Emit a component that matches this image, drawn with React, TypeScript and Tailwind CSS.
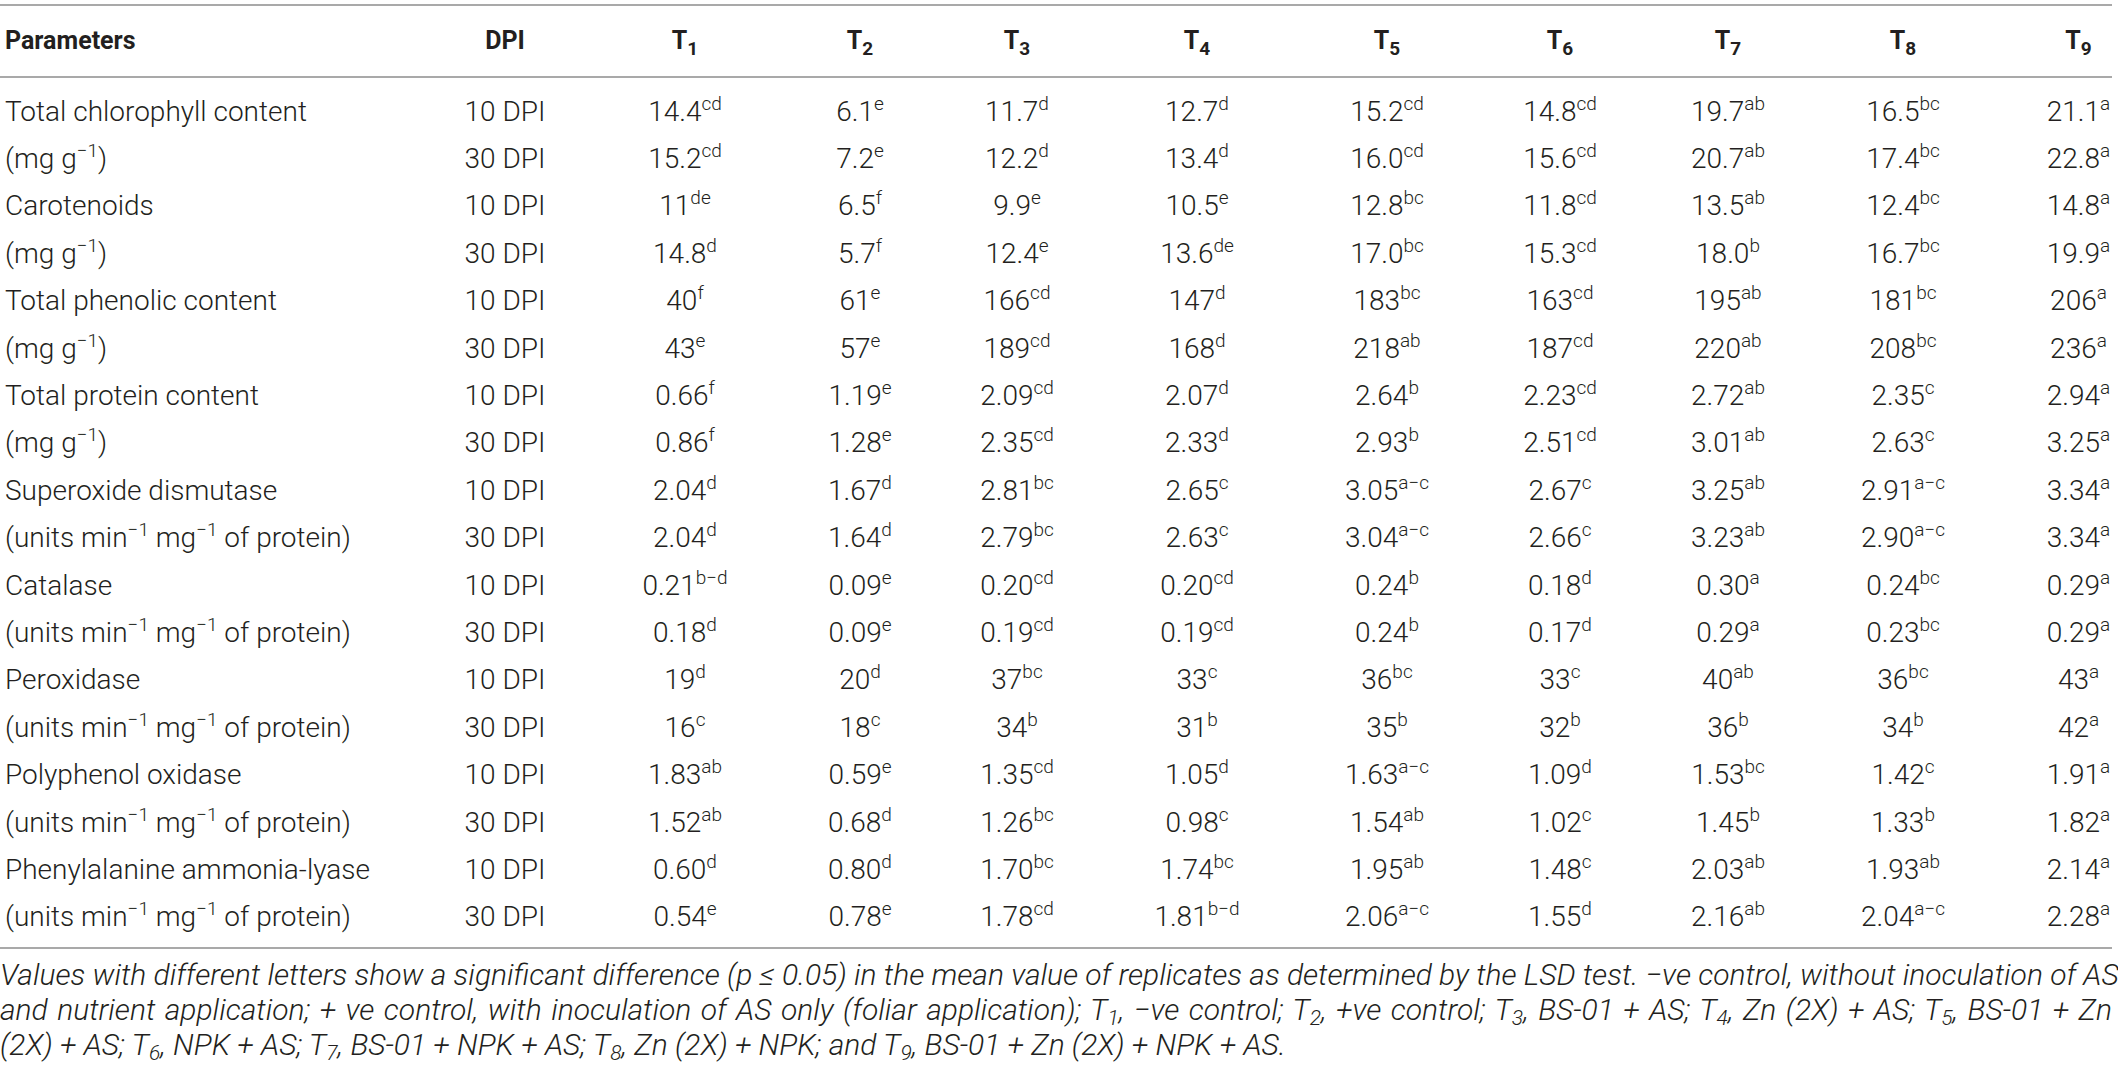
const rows: { label: React.ReactNode; dpi: string; cells: string[] }[] = [];

const units = (
  <>
    (units min<sup className="text-[19px] top-[-11px]">−1</sup> mg<sup className="text-[19px] top-[-11px]">−1</sup> of protein)
  </>
);
const mg = (
  <>
    (mg g<sup className="text-[19px] top-[-11px]">−1</sup>)
  </>
);

const data: [React.ReactNode, string, string][] = [
  ['Total chlorophyll content', '10 DPI', '14.4|cd 6.1|e 11.7|d 12.7|d 15.2|cd 14.8|cd 19.7|ab 16.5|bc 21.1|a'],
  [mg, '30 DPI', '15.2|cd 7.2|e 12.2|d 13.4|d 16.0|cd 15.6|cd 20.7|ab 17.4|bc 22.8|a'],
  ['Carotenoids', '10 DPI', '11|de 6.5|f 9.9|e 10.5|e 12.8|bc 11.8|cd 13.5|ab 12.4|bc 14.8|a'],
  [mg, '30 DPI', '14.8|d 5.7|f 12.4|e 13.6|de 17.0|bc 15.3|cd 18.0|b 16.7|bc 19.9|a'],
  ['Total phenolic content', '10 DPI', '40|f 61|e 166|cd 147|d 183|bc 163|cd 195|ab 181|bc 206|a'],
  [mg, '30 DPI', '43|e 57|e 189|cd 168|d 218|ab 187|cd 220|ab 208|bc 236|a'],
  ['Total protein content', '10 DPI', '0.66|f 1.19|e 2.09|cd 2.07|d 2.64|b 2.23|cd 2.72|ab 2.35|c 2.94|a'],
  [mg, '30 DPI', '0.86|f 1.28|e 2.35|cd 2.33|d 2.93|b 2.51|cd 3.01|ab 2.63|c 3.25|a'],
  ['Superoxide dismutase', '10 DPI', '2.04|d 1.67|d 2.81|bc 2.65|c 3.05|a−c 2.67|c 3.25|ab 2.91|a−c 3.34|a'],
  [units, '30 DPI', '2.04|d 1.64|d 2.79|bc 2.63|c 3.04|a−c 2.66|c 3.23|ab 2.90|a−c 3.34|a'],
  ['Catalase', '10 DPI', '0.21|b−d 0.09|e 0.20|cd 0.20|cd 0.24|b 0.18|d 0.30|a 0.24|bc 0.29|a'],
  [units, '30 DPI', '0.18|d 0.09|e 0.19|cd 0.19|cd 0.24|b 0.17|d 0.29|a 0.23|bc 0.29|a'],
  ['Peroxidase', '10 DPI', '19|d 20|d 37|bc 33|c 36|bc 33|c 40|ab 36|bc 43|a'],
  [units, '30 DPI', '16|c 18|c 34|b 31|b 35|b 32|b 36|b 34|b 42|a'],
  ['Polyphenol oxidase', '10 DPI', '1.83|ab 0.59|e 1.35|cd 1.05|d 1.63|a−c 1.09|d 1.53|bc 1.42|c 1.91|a'],
  [units, '30 DPI', '1.52|ab 0.68|d 1.26|bc 0.98|c 1.54|ab 1.02|c 1.45|b 1.33|b 1.82|a'],
  ['Phenylalanine ammonia-lyase', '10 DPI', '0.60|d 0.80|d 1.70|bc 1.74|bc 1.95|ab 1.48|c 2.03|ab 1.93|ab 2.14|a'],
  [units, '30 DPI', '0.54|e 0.78|e 1.78|cd 1.81|b−d 2.06|a−c 1.55|d 2.16|ab 2.04|a−c 2.28|a'],
];

data.forEach(([label, dpi, s]) => rows.push({ label, dpi, cells: s.split(' ') }));

const grid =
  'grid grid-cols-[415px_180px_180px_170px_144px_216px_164px_182px_154px_196px_111px] items-center';

const T = ({ n }: { n: number }) => (
  <span>
    T<sub className="text-[19px] bottom-[-6px]">{n}</sub>
  </span>
);

const Ti = ({ n }: { n: number }) => (
  <>
    T<sub className="text-[21px] bottom-[-5px]">{n}</sub>
  </>
);

export default function App() {
  return (
    <div className="w-[2112px] bg-white pt-[4px] text-[#231f20] font-[Roboto,'Liberation_Sans',sans-serif]">
      <div className={`${grid} h-[74px] border-y-2 border-[#a9a9a9] text-[25px] font-bold`}>
        <div className="pl-[5px]">Parameters</div>
        <div className="text-center">DPI</div>
        {[1, 2, 3, 4, 5, 6, 7, 8].map((n) => (
          <div key={n} className="text-center">
            <T n={n} />
          </div>
        ))}
        <div className="pl-[44px] text-center">
          <T n={9} />
        </div>
      </div>

      <div className="pt-[10px] pb-[6px] border-b-2 border-[#a9a9a9] text-[28px] font-light">
        {rows.map((r, i) => (
          <div key={i} className={`${grid} h-[47.4px] whitespace-nowrap`}>
            <div className="pl-[5px]">{r.label}</div>
            <div className="text-center">{r.dpi}</div>
            {r.cells.map((c, j) => {
              const [v, l] = c.split('|');
              return (
                <div key={j} className={j === 8 ? 'pl-[44px] text-center' : 'text-center'}>
                  {v}
                  <sup className="text-[19px] top-[-11px]">{l}</sup>
                </div>
              );
            })}
          </div>
        ))}
      </div>

      <div className="pt-[8px] text-[30px] leading-[35px] italic font-light whitespace-nowrap">
        <div className="text-justify [text-align-last:justify]">
          Values with different letters show a significant difference (p ≤ 0.05) in the mean value of replicates as
          determined by the LSD test. −ve control, without inoculation of AS
        </div>
        <div className="text-justify [text-align-last:justify]">
          and nutrient application; + ve control, with inoculation of AS only (foliar application); <Ti n={1} />, −ve
          control; <Ti n={2} />, +ve control; <Ti n={3} />, BS-01 + AS; <Ti n={4} />, Zn (2X) + AS; <Ti n={5} />, BS-01 +
          Zn
        </div>
        <div>
          (2X) + AS; <Ti n={6} />, NPK + AS; <Ti n={7} />, BS-01 + NPK + AS; <Ti n={8} />, Zn (2X) + NPK; and{' '}
          <Ti n={9} />, BS-01 + Zn (2X) + NPK + AS.
        </div>
      </div>
    </div>
  );
}
